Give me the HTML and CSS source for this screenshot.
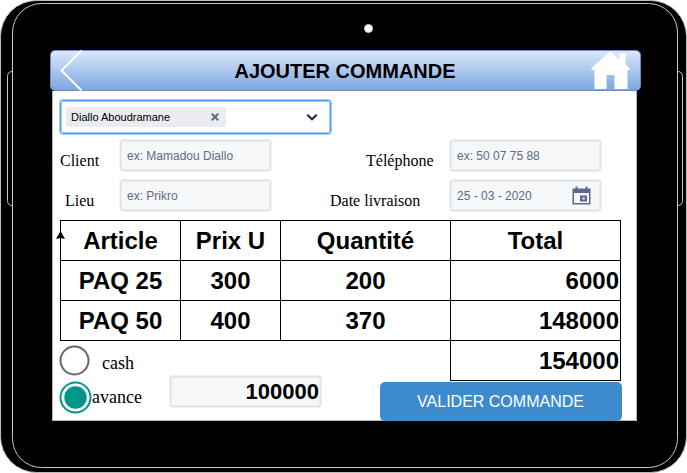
FILE: index.html
```html
<!DOCTYPE html>
<html lang="fr">
<head>
<meta charset="utf-8">
<title>Ajouter commande</title>
<link rel="stylesheet" href="styles.css">
</head>
<body>
<div class="tablet">
  <svg class="frame" width="687" height="473" viewBox="0 0 687 473" fill="none">
    <rect x="0.5" y="0.5" width="686" height="472" rx="36" fill="#000" stroke="#b9beb9"/>
    <rect x="12.5" y="3.5" width="665" height="464" rx="29" stroke="#c8c8c8"/>
    <path d="M12.500 71.500Q7.500 71.500 7.500 76.500V200.500Q7.500 205.500 12.500 205.500M677.500 71.500Q682.500 71.500 682.500 76.500V200.500Q682.500 205.500 677.500 205.500" stroke="#c8c8c8"/>
    <circle cx="368.500" cy="28.500" r="4" fill="#fff" stroke="#c8d0c8"/>
  </svg>

  <header class="topbar">
    <svg class="back" width="24" height="41" viewBox="0 0 24 41" fill="none"><path d="M21.500 0.500L1.500 20.500L21.500 40.500" stroke="#fff" stroke-width="2"/></svg>
    <h1>AJOUTER COMMANDE</h1>
    <svg class="home" width="40" height="40" viewBox="0 0 40 40" fill="#fff"><path d="M19.500 0L28.500 8.500V2.500H34.500V13.500L38.500 17V19H36.500V38H23.500V24H15.500V38H3.500V19H0.500V17Z"/></svg>
  </header>

  <main class="screen">
    <div class="select">
      <span class="chip">Diallo Aboudramane
        <svg width="8" height="8" viewBox="0 0 8 8"><path d="M0.800 0.800L7.200 7.200M7.200 0.800L0.800 7.200" stroke="#596b85" stroke-width="2"/></svg>
      </span>
      <svg width="12" height="8" viewBox="0 0 12 8" fill="none"><path d="M1.300 1.800L6 6.300L10.700 1.800" stroke="#14254a" stroke-width="2"/></svg>
    </div>

    <div class="fields">
      <span class="label">Client</span>
      <div class="input">ex: Mamadou Diallo</div>
      <span class="label phone">Téléphone</span>
      <div class="input">ex: 50 07 75 88</div>
      <span class="label place">Lieu</span>
      <div class="input">ex: Prikro</div>
      <span class="label">Date livraison</span>
      <div class="input">25 - 03 - 2020
        <svg width="19" height="20" viewBox="0 0 19 20"><path fill="#5b6a8a" fill-rule="evenodd" d="M0.500 2.500H3.500V0.500H5.500V2.500H13.500V0.500H15.500V2.500H18.500V18.500H0.500ZM2 7V17H17V7ZM8 9.500H15V15.500H8ZM10.500 11.500V13.500H12.700V11.500Z"/></svg>
      </div>
    </div>

    <div class="order">
      <svg class="pointer" width="9" height="8" viewBox="0 0 9 8"><path d="M4.500 0L9 8L4.500 7L0 8Z"/></svg>
      <table>
        <colgroup><col class="c-article"><col class="c-price"><col class="c-qty"><col class="c-total"></colgroup>
        <tr><th>Article</th><th>Prix U</th><th>Quantité</th><th>Total</th></tr>
        <tr><td>PAQ 25</td><td>300</td><td>200</td><td class="num">6000</td></tr>
        <tr><td>PAQ 50</td><td>400</td><td>370</td><td class="num">148000</td></tr>
        <tr>
          <td class="blank" colspan="3">
            <div class="option cash">
              <svg width="32" height="32" viewBox="0 0 32 32" fill="none"><circle cx="15.500" cy="15.500" r="14" stroke="#666" stroke-width="2"/></svg>
              <span>cash</span>
            </div>
          </td>
          <td class="num">154000</td>
        </tr>
      </table>
    </div>

    <div class="bottom">
      <div class="option advance">
        <svg width="33" height="33" viewBox="0 0 33 33" fill="none"><circle cx="16.500" cy="16.500" r="15" stroke="#009688" stroke-width="2"/><circle cx="16.500" cy="16.500" r="11.200" fill="#009688"/></svg>
        <span>avance</span>
      </div>
      <div class="input amount">100000</div>
      <div class="submit">VALIDER COMMANDE</div>
    </div>
  </main>
</div>
</body>
</html>
```

FILE: styles.css
```css
* { box-sizing: border-box; }

body { margin: 0; background: #fff; color: #000; overflow: hidden; }

svg { display: block; flex: none; }

.tablet {
  position: relative;
  width: 687px;
  height: 473px;
  padding: 50px 46px 0 50px;
  font-family: "Liberation Sans", sans-serif;
}

.frame { position: absolute; left: 0; top: 0; }

.topbar {
  position: relative;
  z-index: 1;
  display: flex;
  justify-content: space-between;
  height: 41px;
  padding: 0 9px 0 9px;
  border: 1px solid #6c8ebf;
  border-radius: 5px;
  background: linear-gradient(#dae8fc, #7ea6e0);
}

.back { margin-top: -1px; }

.topbar h1 {
  margin: 9px 0 0 15px;
  font-size: 20px;
  line-height: 23px;
}

.screen {
  position: relative;
  width: 585px;
  height: 330px;
  margin-left: 2px;
  padding: 9px 0 0 7px;
  background: #fff;
  border: 1px solid #b4b4b4;
  border-top: 0;
}

.select {
  display: flex;
  justify-content: space-between;
  align-items: center;
  width: 271px;
  height: 34px;
  padding: 0 12px 0 5px;
  border: 1px solid #4c9aff;
  border-radius: 3px;
  box-shadow: 0 0 0 1px #4c9aff80, inset 0 0 0 1px #4c9aff80;
}

.chip {
  display: flex;
  justify-content: space-between;
  align-items: center;
  width: 160px;
  height: 20px;
  padding: 0 7px 0 5px;
  border-radius: 2px;
  background: #ebecf0;
  font-size: 11px;
}

.fields {
  display: grid;
  grid-template-columns: 60px 210px 120px 151px;
  grid-auto-rows: 31px;
  row-gap: 9px;
  margin-top: 6px;
}

.label {
  padding-top: 12px;
  font: 16px/18px "Liberation Serif", serif;
  white-space: nowrap;
}

.place { padding-left: 5px; }
.phone { padding-left: 36px; }

.input {
  display: flex;
  justify-content: space-between;
  align-items: center;
  width: 151px;
  height: 31px;
  padding: 0 9px 0 6px;
  border: 1px solid #dfe1e6;
  border-radius: 3px;
  background: #f6f7f9;
  box-shadow: 0 0 0 1px #dfe1e680, inset 0 0 0 1px #dfe1e680;
  color: #5e6c84;
  font-size: 12px;
}

.order { position: relative; margin-top: 9px; }

.pointer { position: absolute; left: -4px; top: 11px; }

table {
  width: 561px;
  table-layout: fixed;
  border-collapse: collapse;
  font-size: 24px;
  font-weight: bold;
  line-height: 28px;
}

.c-article { width: 120px; }
.c-price { width: 100px; }
.c-qty { width: 170px; }
.c-total { width: 170px; }

th, td {
  height: 40px;
  padding: 0;
  border: 1px solid #000;
  text-align: center;
}

.num { padding-right: 1px; text-align: right; }

.blank {
  border-left: 0;
  border-bottom: 0;
  vertical-align: top;
}

.option {
  display: flex;
  align-items: center;
  width: 110px;
  font: 18px/20px "Liberation Serif", serif;
}

.cash {
  gap: 11.5px;
  margin-left: -2px;
  padding-top: 4px;
}

.cash span { padding-top: 4px; }

.advance { margin-left: -1px; width: 111px; }
.advance span { padding-bottom: 2px; }

.bottom {
  display: flex;
  align-items: flex-start;
}

.amount {
  justify-content: flex-end;
  margin-top: -5px;
  padding: 0 1px 0 0;
  color: #000;
  font-size: 22px;
  font-weight: bold;
}

.submit {
  width: 242px;
  height: 39px;
  margin: 1px 0 0 59px;
  padding-right: 1px;
  border-radius: 5px;
  background: #3d8bcd;
  color: #fff;
  font-size: 16px;
  line-height: 39px;
  text-align: center;
}
```
